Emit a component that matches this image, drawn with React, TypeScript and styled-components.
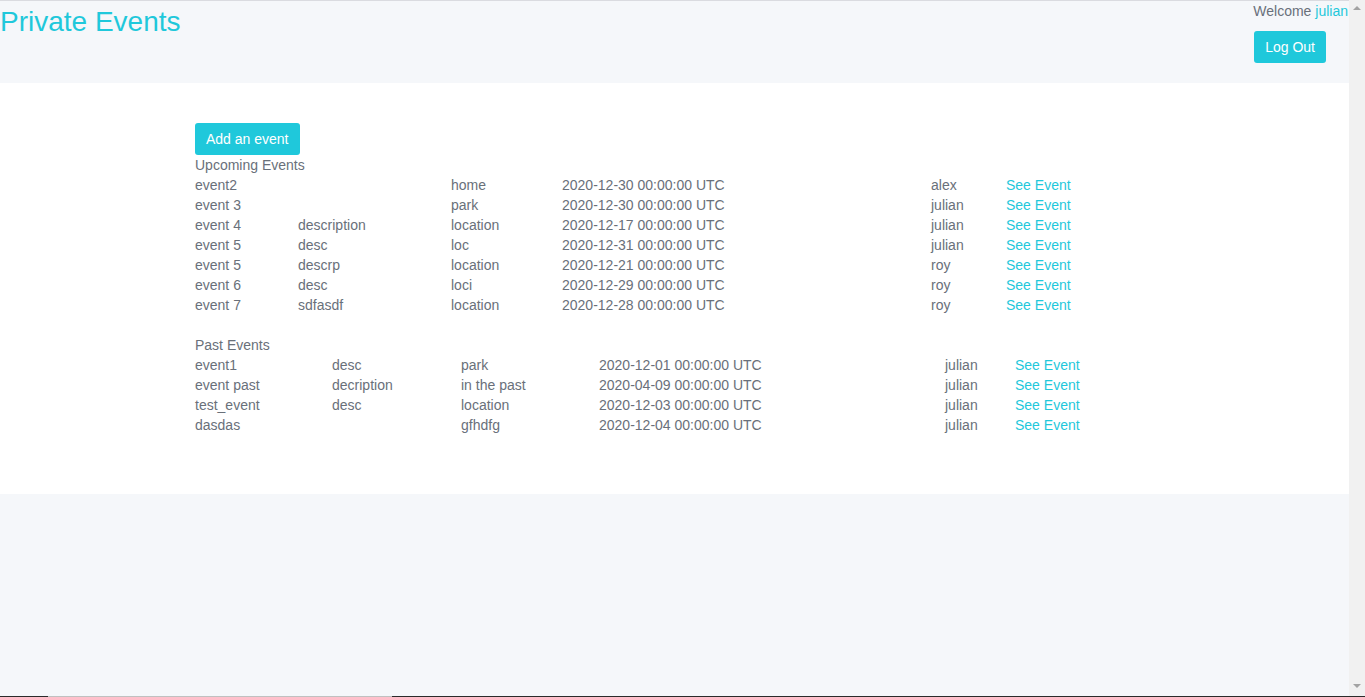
import { Fragment } from 'react';
import styled, { createGlobalStyle } from 'styled-components';

const GlobalStyle = createGlobalStyle`
  html, body {
    margin: 0;
    padding: 0;
    height: 100%;
    overflow: hidden;
  }
  body {
    font-family: 'Liberation Sans', Arial, sans-serif;
    font-size: 14px;
    color: #69707a;
    background: #f5f7fa;
  }
`;

const teal = '#1fc8db';

interface EventRow {
  name: string;
  description: string;
  location: string;
  date: string;
  creator: string;
}

const upcoming: EventRow[] = [
  { name: 'event2', description: '', location: 'home', date: '2020-12-30 00:00:00 UTC', creator: 'alex' },
  { name: 'event 3', description: '', location: 'park', date: '2020-12-30 00:00:00 UTC', creator: 'julian' },
  { name: 'event 4', description: 'description', location: 'location', date: '2020-12-17 00:00:00 UTC', creator: 'julian' },
  { name: 'event 5', description: 'desc', location: 'loc', date: '2020-12-31 00:00:00 UTC', creator: 'julian' },
  { name: 'event 5', description: 'descrp', location: 'location', date: '2020-12-21 00:00:00 UTC', creator: 'roy' },
  { name: 'event 6', description: 'desc', location: 'loci', date: '2020-12-29 00:00:00 UTC', creator: 'roy' },
  { name: 'event 7', description: 'sdfasdf', location: 'location', date: '2020-12-28 00:00:00 UTC', creator: 'roy' },
];

const past: EventRow[] = [
  { name: 'event1', description: 'desc', location: 'park', date: '2020-12-01 00:00:00 UTC', creator: 'julian' },
  { name: 'event past', description: 'decription', location: 'in the past', date: '2020-04-09 00:00:00 UTC', creator: 'julian' },
  { name: 'test_event', description: 'desc', location: 'location', date: '2020-12-03 00:00:00 UTC', creator: 'julian' },
  { name: 'dasdas', description: '', location: 'gfhdfg', date: '2020-12-04 00:00:00 UTC', creator: 'julian' },
];

const Screen = styled.div`
  display: flex;
  flex-direction: column;
  height: 697px;
`;

const Viewport = styled.div`
  flex: 1;
  display: flex;
  min-height: 0;
`;

const Page = styled.div`
  flex: 1;
  display: flex;
  flex-direction: column;
  background: #f5f7fa;
  border-top: 1px solid #dadbe0;
`;

const Header = styled.header`
  height: 82px;
  display: flex;
  justify-content: space-between;
  align-items: flex-start;
`;

const Title = styled.h1`
  margin: 5px 0 0;
  font-size: 28px;
  font-weight: 400;
  line-height: 1.15;
  color: ${teal};
`;

const UserBox = styled.div`
  display: flex;
  flex-direction: column;
  align-items: flex-end;
`;

const Welcome = styled.div`
  line-height: 20px;
  margin-right: 1px;
`;

const Link = styled.a`
  color: ${teal};
  text-decoration: none;
`;

const Button = styled.button<{ $mr?: number }>`
  height: 32px;
  padding: 0 11px;
  margin-right: ${(p) => p.$mr ?? 0}px;
  border: none;
  border-radius: 3px;
  background: ${teal};
  color: #fff;
  font-family: inherit;
  font-size: 14px;
  line-height: 32px;
  cursor: pointer;
`;

const LogOut = styled(Button)`
  margin-top: 10px;
`;

const Main = styled.main`
  background: #fff;
  padding: 40px 0 59px;
`;

const Container = styled.div`
  width: 960px;
  margin: 0 auto;
  padding-left: 1px;
`;

const SectionTitle = styled.div`
  line-height: 20px;
`;

const Table = styled.div<{ $cols: string }>`
  display: grid;
  grid-template-columns: ${(p) => p.$cols};
  line-height: 20px;
  margin-bottom: 20px;

  &:last-child {
    margin-bottom: 0;
  }
`;

const Cell = styled.div`
  white-space: nowrap;
`;

const Scrollbar = styled.div`
  width: 16px;
  background: #f1f1f1;
  display: flex;
  flex-direction: column;
  justify-content: space-between;
  align-items: center;
  padding: 6px 0 8px;
`;

const Arrow = styled.div<{ $down?: boolean }>`
  width: 0;
  height: 0;
  border-left: 4px solid transparent;
  border-right: 4px solid transparent;
  ${(p) =>
    p.$down ? 'border-top: 4px solid #a3a3a3;' : 'border-bottom: 4px solid #a3a3a3;'}
`;

const TaskLine = styled.div`
  height: 1px;
  display: flex;
  background: #2b2b2b;
`;

const TaskSegment = styled.div`
  margin-left: 48px;
  width: 344px;
  background: #c0c0c0;
`;

const EventTable = ({ rows, cols }: { rows: EventRow[]; cols: string }) => (
  <Table $cols={cols}>
    {rows.map((r, i) => (
      <Fragment key={i}>
        <Cell>{r.name}</Cell>
        <Cell>{r.description}</Cell>
        <Cell>{r.location}</Cell>
        <Cell>{r.date}</Cell>
        <Cell>{r.creator}</Cell>
        <Cell>
          <Link href="#">See Event</Link>
        </Cell>
      </Fragment>
    ))}
  </Table>
);

export default function App() {
  return (
    <>
      <GlobalStyle />
      <Screen>
        <Viewport>
          <Page>
            <Header>
              <Title>Private Events</Title>
              <UserBox>
                <Welcome>
                  Welcome <Link href="#">julian</Link>
                </Welcome>
                <LogOut $mr={23}>Log Out</LogOut>
              </UserBox>
            </Header>
            <Main>
              <Container>
                <Button>Add an event</Button>
                <SectionTitle>Upcoming Events</SectionTitle>
                <EventTable rows={upcoming} cols="103px 153px 111px 369px 75px auto" />
                <SectionTitle>Past Events</SectionTitle>
                <EventTable rows={past} cols="137px 129px 138px 346px 70px auto" />
              </Container>
            </Main>
          </Page>
          <Scrollbar>
            <Arrow />
            <Arrow $down />
          </Scrollbar>
        </Viewport>
        <TaskLine>
          <TaskSegment />
        </TaskLine>
      </Screen>
    </>
  );
}
